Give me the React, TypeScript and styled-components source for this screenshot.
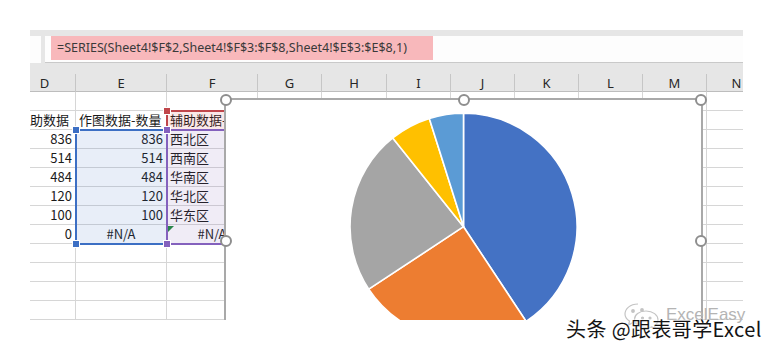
import styled, { createGlobalStyle } from "styled-components"

const GlobalStyle = createGlobalStyle`
    html, body {
        margin: 0;
        padding: 0;
        background: #ffffff;
    }
    body {
        font-family: "Noto Sans CJK SC", "Liberation Sans", sans-serif;
    }
`

const Page = styled.div`
    position: relative;
    width: 773px;
    height: 351px;
    overflow: hidden;
    background: #ffffff;
    padding: 30px 0 0 30px;
    box-sizing: border-box;
`

const Viewport = styled.div`
    position: relative;
    width: 713px;
    height: 290px;
    overflow: hidden;
`

const FormulaBar = styled.div`
    display: flex;
    align-items: stretch;
    height: 33px;
    padding-top: 6px;
    box-sizing: border-box;
    background: #e6e6e6;
`

const NameBox = styled.div`
    width: 11px;
    background: #fdfdfd;
`

const FormulaBox = styled.div`
    flex: 1;
    margin-left: 4px;
    padding-left: 6px;
    background: #fdfdfd;
    border-bottom: 1px solid #c9c9c9;
`

const FormulaHighlight = styled.div`
    width: 382px;
    height: 24px;
    padding-left: 6px;
    box-sizing: border-box;
    background: #f8b8bb;
    color: #3a3a3a;
    font-family: "Noto Sans", "Liberation Sans", sans-serif;
    font-size: 12.5px;
    line-height: 24px;
    white-space: nowrap;
`

// column widths, D is partly scrolled off to the left
const widths = [62, 91, 91, 64, 65, 64, 64, 64, 64, 64, 60]
const columns = widths.map((w) => w + "px").join(" ")
const ROW = 19
const colLeft = (i: number) => widths.slice(0, i).reduce((a, b) => a + b, 0)

const HeaderRow = styled.div`
    display: grid;
    grid-template-columns: ${columns};
    height: 29px;
    margin-left: -16px;
    background: #e6e6e6;
    border-bottom: 1px solid #bdbdbd;
    box-sizing: border-box;
`

const HeaderCell = styled.div`
    display: flex;
    align-items: center;
    justify-content: center;
    margin-top: 11px;
    border-right: 1px solid #c6c6c6;
    color: #262626;
    font-family: "Noto Sans", "Liberation Sans", sans-serif;
    font-size: 13px;
`

const GridBody = styled.div`
    position: relative;
    margin-left: -16px;
`

const Row = styled.div`
    display: grid;
    grid-template-columns: ${columns};
    height: ${ROW}px;
    border-bottom: 1px solid #d6d6d6;
    box-sizing: border-box;
`

const Cell = styled.div<{ $align?: "left" | "right" | "center" }>`
    position: relative;
    border-right: 1px solid #d6d6d6;
    padding: 0 3px;
    font-size: 13px;
    line-height: 18px;
    color: #1a1a1a;
    text-align: ${(p) => p.$align || "left"};
    white-space: nowrap;
    overflow: hidden;
`

const ErrorMark = styled.span`
    position: absolute;
    left: 1px;
    top: 1px;
    width: 0;
    height: 0;
    border-top: 6px solid #1e8a3c;
    border-right: 6px solid transparent;
`

const RangeBox = styled.div<{ $color: string; $fill: string }>`
    position: absolute;
    box-sizing: border-box;
    margin: -1px 0 0 -1px;
    border: 2px solid ${(p) => p.$color};
    background: ${(p) => p.$fill};
    pointer-events: none;
`

const RangeHandle = styled.div<{ $color: string; $bottom?: boolean }>`
    position: absolute;
    left: -5px;
    ${(p) => (p.$bottom ? "bottom: -5px;" : "top: -5px;")}
    width: 6px;
    height: 6px;
    background: ${(p) => p.$color};
    border: 1px solid #ffffff;
`

const Chart = styled.div`
    position: absolute;
    left: 210px;
    top: 6px;
    width: 479px;
    height: 286px;
    box-sizing: border-box;
    background: #ffffff;
    border: 2px solid #a9a9a9;
`

const ChartHandle = styled.div<{ $x: number; $y: number }>`
    position: absolute;
    left: ${(p) => p.$x}%;
    top: ${(p) => p.$y}%;
    width: 8px;
    height: 8px;
    margin: -6px 0 0 -6px;
    border-radius: 50%;
    border: 2px solid #8e8e8e;
    background: #ffffff;
`

const Watermark = styled.div`
    position: absolute;
    left: 566px;
    top: 317px;
    font-size: 20px;
    letter-spacing: 0.4px;
    line-height: 24px;
    color: #141414;
    white-space: nowrap;
    text-shadow: 0 0 2px #ffffff, 0 0 2px #ffffff;
`

const Stamp = styled.div`
    position: absolute;
    left: 623px;
    top: 301px;
    display: flex;
    align-items: center;
    gap: 5px;
    color: #b4b4b4;
    font-family: "Liberation Sans", sans-serif;
    font-size: 17px;
`

const values = [836, 514, 484, 120, 100]
const colors = ["#4472c4", "#ed7d31", "#a5a5a5", "#ffc000", "#5b9bd5"]
const total = values.reduce((a, b) => a + b, 0)

function slicePath(cx: number, cy: number, r: number, a0: number, a1: number) {
    const x0 = cx + r * Math.cos(a0)
    const y0 = cy + r * Math.sin(a0)
    const x1 = cx + r * Math.cos(a1)
    const y1 = cy + r * Math.sin(a1)
    const large = a1 - a0 > Math.PI ? 1 : 0
    return `M ${cx} ${cy} L ${x0} ${y0} A ${r} ${r} 0 ${large} 1 ${x1} ${y1} Z`
}

function Pie() {
    const cx = 237.5
    const cy = 126.7
    const r = 113.5
    let angle = -Math.PI / 2
    return (
        <svg width="475" height="282" style={{ display: "block" }}>
            {values.map((v, i) => {
                const a0 = angle
                const a1 = angle + (v / total) * Math.PI * 2
                angle = a1
                return <path key={i} d={slicePath(cx, cy, r, a0, a1)} fill={colors[i]} stroke="#ffffff" strokeWidth="1.6" strokeLinejoin="round" />
            })}
        </svg>
    )
}

const headers = ["D", "E", "F", "G", "H", "I", "J", "K", "L", "M", "N"]

type CellData = { text?: string; align?: "left" | "right" | "center"; mark?: boolean }

const rows: CellData[][] = [
    [],
    [{ text: "辅助数据" }, { text: "作图数据-数量" }, { text: "辅助数据-数量" }],
    [{ text: "836", align: "right" }, { text: "836", align: "right" }, { text: "西北区" }],
    [{ text: "514", align: "right" }, { text: "514", align: "right" }, { text: "西南区" }],
    [{ text: "484", align: "right" }, { text: "484", align: "right" }, { text: "华南区" }],
    [{ text: "120", align: "right" }, { text: "120", align: "right" }, { text: "华北区" }],
    [{ text: "100", align: "right" }, { text: "100", align: "right" }, { text: "华东区" }],
    [{ text: "0", align: "right" }, { text: "#N/A", align: "center" }, { text: "#N/A", align: "center", mark: true }],
    [],
    [],
    [],
    [],
]

// highlighted reference ranges from the SERIES formula: column, first row, row count
const ranges = [
    { col: 2, row: 1, count: 1, color: "#c0464b", fill: "rgba(220, 80, 80, 0.13)", handles: [false] },
    { col: 1, row: 2, count: 6, color: "#3c6fc4", fill: "rgba(68, 114, 196, 0.12)", handles: [false, true] },
    { col: 2, row: 2, count: 6, color: "#8461bd", fill: "rgba(130, 100, 180, 0.12)", handles: [false, true] },
]

function StampIcon() {
    return (
        <svg width="38" height="28" viewBox="0 0 38 28" fill="none" stroke="#c4c4c4" strokeWidth="1.2">
            <path d="M15 3 C7 3 2 8 2 13 C2 16 4 18.5 6.5 20 L5.5 24 L10 21.5 C11.5 22 13 22.2 15 22.2" />
            <path d="M23 10 C30 10 35 14 35 19 C35 21.5 33.5 23.5 31.5 25 L32.5 27.5 L28.5 26 C27 26.4 25 26.6 23 26.6 C16 26.6 11.5 22.8 11.5 18.3 C11.5 13.8 16 10 23 10 Z" />
            <circle cx="10" cy="10" r="1.3" fill="#c4c4c4" />
            <circle cx="19" cy="9" r="1.3" fill="#c4c4c4" />
            <circle cx="19.5" cy="17" r="1" fill="#c4c4c4" />
            <circle cx="27" cy="17" r="1" fill="#c4c4c4" />
        </svg>
    )
}

export default function App() {
    return (
        <Page>
            <GlobalStyle />
            <Viewport>
                <FormulaBar>
                    <NameBox />
                    <FormulaBox>
                        <FormulaHighlight>=SERIES(Sheet4!$F$2,Sheet4!$F$3:$F$8,Sheet4!$E$3:$E$8,1)</FormulaHighlight>
                    </FormulaBox>
                </FormulaBar>
                <HeaderRow>
                    {headers.map((h) => (
                        <HeaderCell key={h}>{h}</HeaderCell>
                    ))}
                </HeaderRow>
                <GridBody>
                    {rows.map((row, ri) => (
                        <Row key={ri}>
                            {headers.map((h, ci) => {
                                const c = row[ci]
                                return (
                                    <Cell key={h} $align={c?.align}>
                                        {c?.mark && <ErrorMark />}
                                        {c?.text}
                                    </Cell>
                                )
                            })}
                        </Row>
                    ))}

                    {ranges.map((r, i) => (
                        <RangeBox
                            key={i}
                            $color={r.color}
                            $fill={r.fill}
                            style={{ left: colLeft(r.col), top: r.row * ROW, width: widths[r.col] + 2, height: r.count * ROW + 2 }}
                        >
                            {r.handles.map((b, j) => (
                                <RangeHandle key={j} $color={r.color} $bottom={b} />
                            ))}
                        </RangeBox>
                    ))}

                    <Chart>
                        <Pie />
                        <ChartHandle $x={0} $y={0} />
                        <ChartHandle $x={50} $y={0} />
                        <ChartHandle $x={100} $y={0} />
                        <ChartHandle $x={0} $y={50} />
                        <ChartHandle $x={100} $y={50} />
                    </Chart>
                </GridBody>
            </Viewport>
            <Stamp>
                <StampIcon />
                <span>ExcelEasy</span>
            </Stamp>
            <Watermark>头条 @跟表哥学Excel</Watermark>
        </Page>
    )
}
